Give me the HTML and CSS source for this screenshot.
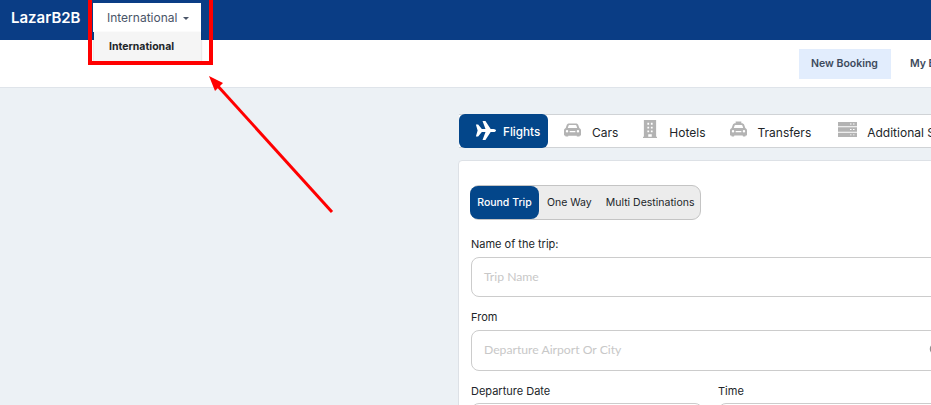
FILE: index.html
```html
<!DOCTYPE html>
<html lang="en">
<head>
<meta charset="utf-8">
<title>LazarB2B</title>
<link rel="stylesheet" href="styles.css">
</head>
<body>
<div class="page">
  <header class="topbar">
    <span class="brand">LazarB2B</span>
    <div class="dropdown">
      <button class="dropdown-toggle">International <i class="caret"></i></button>
      <div class="dropdown-menu"><span class="dropdown-item">International</span></div>
    </div>
  </header>
  <nav class="subbar">
    <a class="subnav active">New Booking</a>
    <a class="subnav">My Bookings</a>
  </nav>
  <main class="main">
    <div class="spacer"></div>
    <section class="content">
      <div class="tabs">
        <a class="tab active">
          <svg class="ico plane" viewBox="0 0 24 24" preserveAspectRatio="none"><path d="M1 4.500h2.600L7.800 10H12L8.600 0h3.300l6 10h3.300c1.600 0 2.800 1 2.800 2s-1.200 2-2.800 2h-3.300l-6 10H8.600L12 14H7.800l-4.200 5.500H1L3 12z" fill="#fff"/></svg>
          <span>Flights</span>
        </a>
        <a class="tab">
          <svg class="ico car" viewBox="0 0 18 14"><path fill-rule="evenodd" d="M3 1.500C3.500.5 4.500 0 5.500 0h7c1 0 2 .5 2.500 1.500L16.200 5c1 .4 1.800 1.400 1.800 2.500V12c0 .5-.4 1-1 1h-.5v.5c0 .3-.2.5-.5.500h-2c-.3 0-.5-.2-.5-.5V13H4.500v.5c0 .3-.2.5-.5.500H2c-.3 0-.5-.2-.5-.5V13H1c-.6 0-1-.5-1-1V7.500C0 6.400.8 5.400 1.800 5zM4 5h10l-.9-2.800c-.1-.3-.4-.5-.7-.5H5.600c-.3 0-.6.2-.7.5zM3.200 7a1.300 1.300 0 100 2.600 1.300 1.300 0 000-2.600zm11.600 0a1.300 1.300 0 100 2.600 1.300 1.300 0 000-2.600zM6 8v1.500h6V8z" fill="#b3b3b3"/></svg>
          <span>Cars</span>
        </a>
        <a class="tab">
          <svg class="ico hotel" viewBox="0 0 16 19" preserveAspectRatio="none"><path fill-rule="evenodd" d="M1 0h14v17.800h1V19H0v-1.200h1zM5 3v2h2V3zm4 0v2h2V3zM5 7v2h2V7zm4 0v2h2V7zm-4 4v2h2v-2zm4 0v2h2v-2zm-3 4v2.800h4V15z" fill="#b3b3b3"/></svg>
          <span>Hotels</span>
        </a>
        <a class="tab">
          <svg class="ico taxi" viewBox="0 0 18 16"><path fill-rule="evenodd" d="M6 0h6v2h.5c1 0 2 .6 2.500 1.500L16.200 7c1 .4 1.800 1.400 1.800 2.500V14c0 .5-.4 1-1 1h-.5v.5c0 .3-.2.500-.5.500h-2c-.3 0-.5-.2-.5-.5V15H4.500v.5c0 .3-.2.5-.5.500H2c-.3 0-.5-.2-.5-.5V15H1c-.6 0-1-.5-1-1V9.500C0 8.400.8 7.400 1.800 7L3 3.500C3.500 2.600 4.500 2 5.500 2H6zM4 7h10l-.9-2.800c-.1-.3-.4-.5-.7-.5H5.600c-.3 0-.6.2-.7.5zM3.200 9a1.300 1.300 0 100 2.600 1.300 1.300 0 000-2.600zm11.600 0a1.300 1.300 0 100 2.600 1.300 1.300 0 000-2.600zM6 10v1.500h6V10z" fill="#b3b3b3"/></svg>
          <span>Transfers</span>
        </a>
        <a class="tab">
          <svg class="ico server" viewBox="0 0 19 16" preserveAspectRatio="none"><path fill-rule="evenodd" d="M0 0h19v4.500H0zm0 5.700h19v4.600H0zm0 5.800h19V16H0zM12 1.700v1h1.500v-1zm3 0v1h1.500v-1zm-3 5.800v1h1.500v-1zm3 0v1h1.500v-1zm-3 5.700v1h1.500v-1zm3 0v1h1.500v-1z" fill="#b3b3b3"/></svg>
          <span>Additional Services</span>
        </a>
      </div>
      <div class="card">
        <div class="trip-types">
          <button class="trip active">Round Trip</button>
          <button class="trip">One Way</button>
          <button class="trip">Multi Destinations</button>
        </div>
        <label class="label first">Name of the trip:</label>
        <div class="field"><span class="placeholder">Trip Name</span></div>
        <label class="label">From</label>
        <div class="field tall">
          <span class="placeholder">Departure Airport Or City</span>
          <svg class="field-icon" viewBox="0 0 12 12"><circle cx="6" cy="6" r="4.500" fill="none" stroke="#8f8f8f" stroke-width="1.500"/></svg>
        </div>
        <div class="row">
          <div class="col date"><label class="label">Departure Date</label><div class="field"></div></div>
          <div class="col time"><label class="label">Time</label><div class="field"></div></div>
        </div>
      </div>
    </section>
  </main>
  <div class="annotation">
    <div class="red-box"></div>
    <svg class="arrow" viewBox="0 0 931 405" width="931" height="405"><line x1="332" y1="212" x2="216" y2="84" stroke="#f00" stroke-width="3"/><polygon points="209,76 223,83 215,91" fill="#f00"/></svg>
  </div>
</div>
</body>
</html>
```
FILE: styles.css
```css
* { box-sizing: border-box; }
html, body { margin: 0; padding: 0; height: 100%; overflow: hidden; }
body { font-family: Inter, "Liberation Sans", sans-serif; background: #ecf1f5; color: #212529; }
.page { position: relative; width: 931px; height: 405px; overflow: hidden; }
.topbar { height: 40px; background: #0a3d85; display: flex; align-items: flex-start; padding-left: 11px; }
.brand { color: #fff; font-weight: 600; font-size: 15px; line-height: 36px; margin-right: 13px; width: 69px; white-space: nowrap; }
.dropdown { position: relative; margin-top: 3px; }
.dropdown-toggle { display: flex; align-items: center; width: 108px; height: 29px; padding: 0 0 0 14px; border: 0; background: #fff; color: #4a5568; font: 400 12px Inter, sans-serif; }
.caret { display: inline-block; margin-left: 6px; margin-top: 2px; border-top: 3.500px solid #4a5568; border-left: 3.500px solid transparent; border-right: 3.500px solid transparent; }
.dropdown-menu { position: absolute; left: 1px; top: 29px; width: 107px; height: 30px; background: #f5f5f5; box-shadow: 0 1px 2px rgba(0,0,0,.25); padding-left: 15px; z-index: 2; }
.dropdown-item { font-size: 10.500px; font-weight: 700; line-height: 29px; color: #212529; }
.subbar { height: 48px; background: #fff; border-bottom: 1px solid #dfe4ea; display: flex; align-items: flex-start; padding: 9px 0 0 799px; gap: 7px; white-space: nowrap; }
.subnav { display: block; flex: none; height: 30px; padding: 0 12px; line-height: 29px; font-size: 10.500px; font-weight: 600; color: #3d4a5c; }
.subnav.active { background: #e2edfd; width: 92px; }
.main { display: grid; grid-template-columns: 458px 700px; padding-top: 26px; }
.tabs { display: flex; align-items: center; height: 34px; margin-left: 1px; background: #fff; border-top: 1px solid #d0d3d6; border-bottom: 1px solid #d0d3d6; white-space: nowrap; }
.tab { display: flex; align-items: center; height: 32px; font-size: 12px; color: #212529; flex: none; }
.tab span { padding-top: 2px; }
.tab.active { height: 34px; margin: -1px 0; width: 89px; padding: 0 0 0 16px; background: #03468a; border-radius: 6px; color: #fff; font-size: 11.700px; font-weight: 500; }
.ico { flex: none; display: block; }
.plane { width: 21px; height: 19px; margin: -2px 7px 0 0; }
.car { width: 17px; height: 14px; margin: -3px 11px 0 16px; }
.hotel { width: 14px; height: 18px; margin: -4px 12px 0 25px; }
.taxi { width: 17px; height: 16px; margin: -4px 11px 0 24px; }
.server { width: 19px; height: 15px; margin: -4px 10px 0 27px; }
.card { margin-top: 12px; height: 400px; background: #fff; border: 1px solid #dde1e6; border-radius: 4px; padding: 24px 12px 0; }
.trip-types { display: inline-flex; height: 35px; margin-left: -1px; border: 1px solid #c4c4c4; border-radius: 9px; background: #ececec; vertical-align: top; }
.trip { border: 0; background: none; font: 400 10.500px Inter, sans-serif; color: #212529; padding: 0 6px 0 8px; height: 33px; white-space: nowrap; }
.trip.active { background: #03468a; color: #fff; border-radius: 8px; font-weight: 500; width: 69px; margin-left: -1px; padding: 0; }
.label { display: block; font-size: 11px; line-height: 14px; color: #212529; margin: 13px 0 6px; }
.label.first { margin-top: 17px; }
.field { position: relative; display: flex; align-items: center; height: 40px; width: 700px; border: 1px solid #ccc; border-radius: 8px; padding-left: 12px; }
.field.tall { height: 41px; }
.placeholder { margin-top: -2px; font-family: Lato, sans-serif; font-size: 12.200px; color: #c8c8c8; }
.field-icon { position: absolute; left: 457px; top: 12px; width: 12px; height: 12px; }
.row { display: flex; gap: 15px; }
.col .label { margin-bottom: 5px; }
.col .field { width: 100%; }
.date { width: 232px; }
.time { width: 300px; }
.annotation { position: absolute; left: 0; top: 0; width: 931px; height: 405px; pointer-events: none; z-index: 5; }
.red-box { position: absolute; left: 88px; top: -4px; width: 125px; height: 69px; border: 4px solid #f00; }
.arrow { position: absolute; left: 0; top: 0; }
```
